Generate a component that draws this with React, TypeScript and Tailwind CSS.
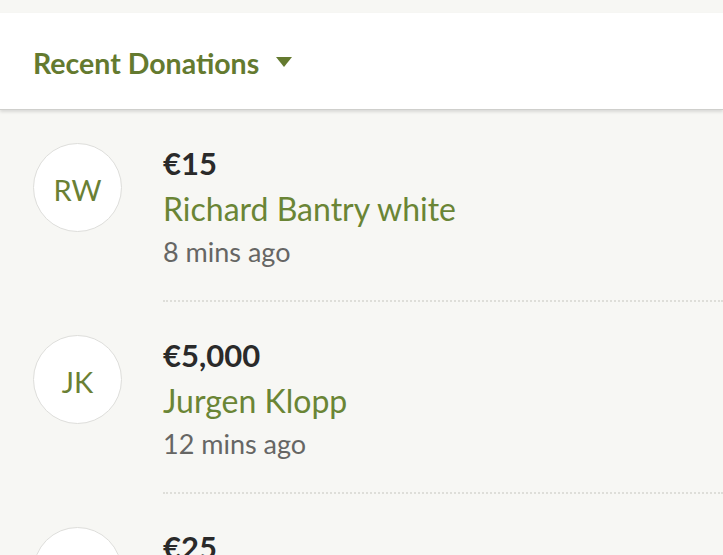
import React from "react";

interface Donation {
    initials: string;
    amount: string;
    name: string;
    time: string;
}

const donations: Donation[] = [
    { initials: "RW", amount: "€15", name: "Richard Bantry white", time: "8 mins ago" },
    { initials: "JK", amount: "€5,000", name: "Jurgen Klopp", time: "12 mins ago" },
    { initials: "", amount: "€25", name: "", time: "" },
];

function DonationRow({ donation }: { donation: Donation }) {
    return (
        <div className="flex items-start pl-[33px] pt-[33px]">
            <div className="w-[89px] h-[89px] shrink-0 rounded-full bg-white border-[1.5px] border-[#dededb] flex items-center justify-center pt-[5px] text-[29px] text-[#6a8034]">
                {donation.initials}
            </div>
            <div className="ml-[41px] flex-1 pt-[2px] pb-[32px] border-b-2 border-dotted border-[#deded9]">
                <div className="text-[31px] leading-[36px] font-bold text-[#2a2a2a]">{donation.amount}</div>
                <div className="mt-[10px] text-[32px] leading-[36px] text-[#6a8535]">{donation.name}</div>
                <div className="mt-[9px] text-[27px] leading-[32px] text-[#666664]">{donation.time}</div>
            </div>
        </div>
    );
}

export default function App() {
    return (
        <div
            className="w-[723px] h-[555px] overflow-hidden bg-[#f7f7f4] pt-[13px]"
            style={{ fontFamily: "Lato, 'Liberation Sans', sans-serif" }}
        >
            <div className="relative z-10 h-[97px] bg-white border-b border-[#cfcfcc] shadow-[0_2px_3px_rgba(0,0,0,0.12)] flex items-center pl-[33px]">
                <span className="text-[28.5px] font-bold text-[#647a2f] pt-[4px]">Recent Donations</span>
                <svg className="ml-[17px] mt-[2px]" width="16" height="10" viewBox="0 0 16 10">
                    <polygon points="0,0 16,0 8,10" fill="#647a2f" />
                </svg>
            </div>
            <div>
                {donations.map((d, i) => (
                    <DonationRow key={i} donation={d} />
                ))}
            </div>
        </div>
    );
}
